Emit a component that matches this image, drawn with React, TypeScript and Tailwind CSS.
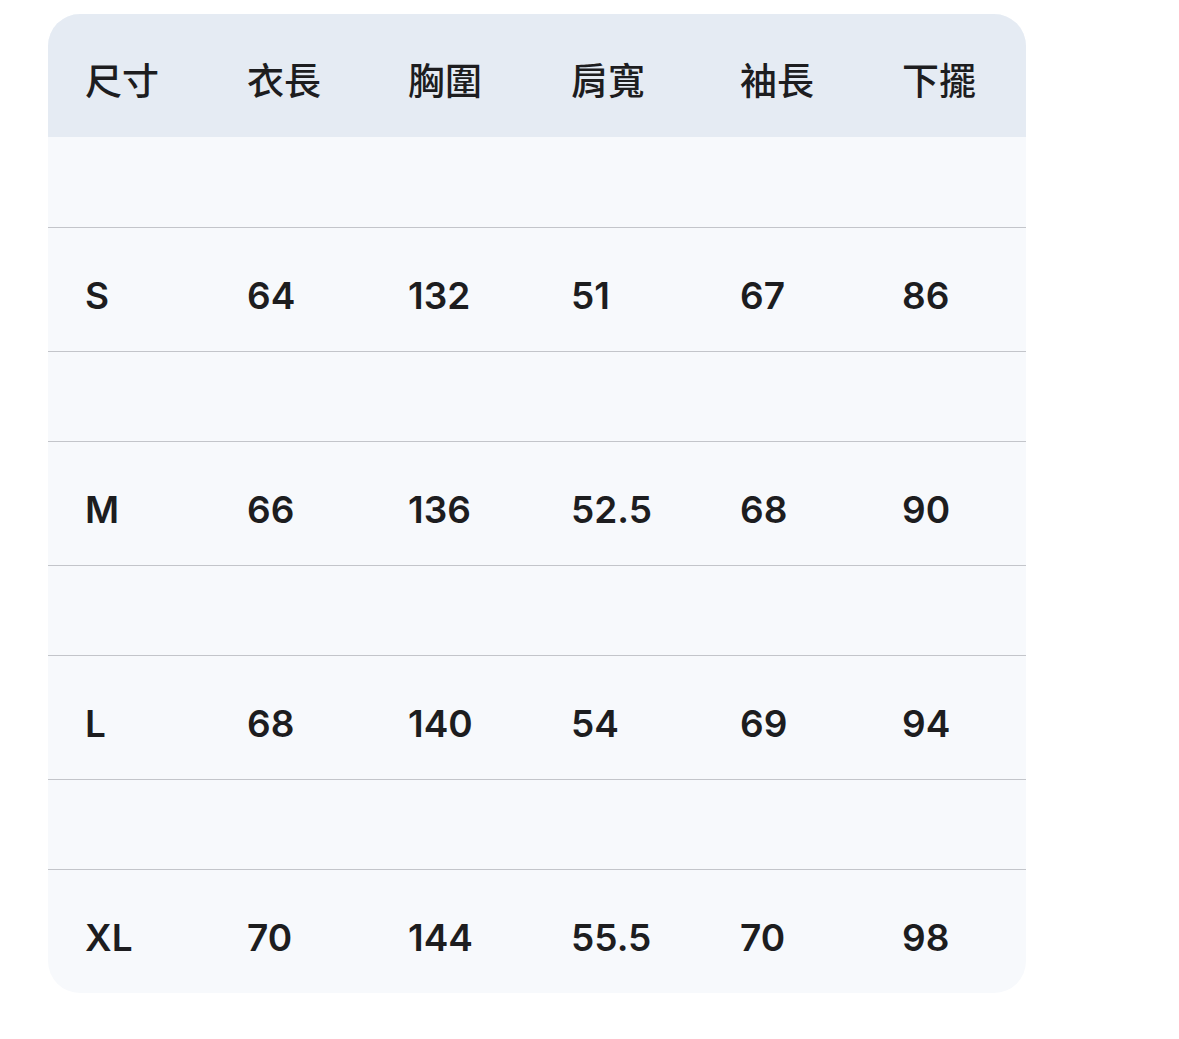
const headers = ["尺寸", "衣長", "胸圍", "肩寬", "袖長", "下擺"];

const rows = [
  ["S", "64", "132", "51", "67", "86"],
  ["M", "66", "136", "52.5", "68", "90"],
  ["L", "68", "140", "54", "69", "94"],
  ["XL", "70", "144", "55.5", "70", "98"],
];

const colWidths = ["w-[162px]", "w-[161px]", "w-[163px]", "w-[169px]", "w-[162px]", "w-[161px]"];

export default function App() {
  return (
    <div
      className="min-h-screen bg-white pl-[48px] pt-[14px] text-[#1d1d1f]"
      style={{ fontFamily: 'Inter, "Noto Sans CJK TC", sans-serif' }}
    >
      <div className="w-[978px] overflow-hidden rounded-[32px] bg-[#f7f9fc]">
        {/* Header */}
        <div className="flex h-[123px] items-center bg-[#e5ebf3] pt-[12px]">
          {headers.map((h, i) => (
            <div key={h} className={`${colWidths[i]} pl-[37px] text-[37px] font-medium leading-none`}>
              {h}
            </div>
          ))}
        </div>

        {rows.map((row, ri) => (
          <div key={row[0]}>
            <div className={`h-[90px] ${ri > 0 ? "border-t border-[#c3c5ca]" : ""}`}></div>
            <div className="flex h-[124px] items-center border-t border-[#c3c5ca] pt-[12px]">
              {row.map((cell, ci) => (
                <div key={ci} className={`${colWidths[ci]} pl-[37px] text-[37px] font-semibold leading-none`}>
                  {cell}
                </div>
              ))}
            </div>
          </div>
        ))}
      </div>
    </div>
  );
}
